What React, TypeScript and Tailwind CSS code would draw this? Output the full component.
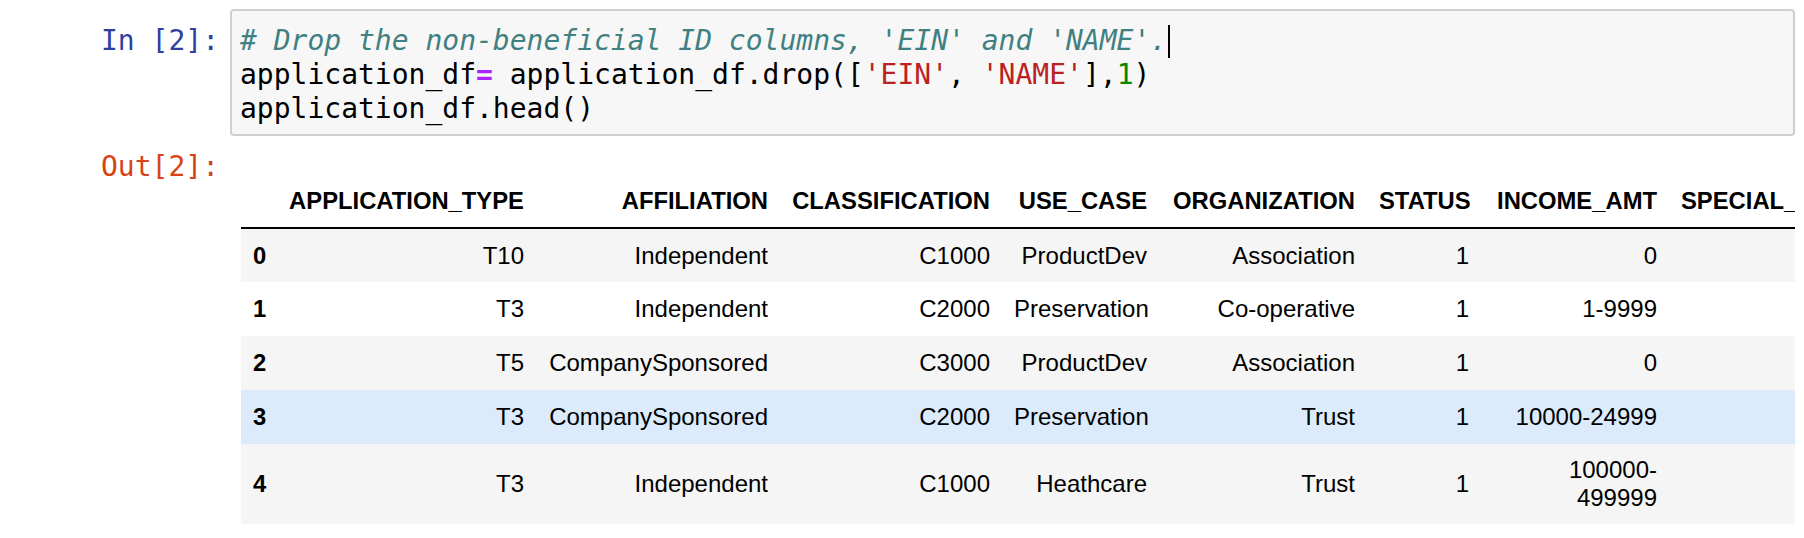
const columns = [
  { name: "APPLICATION_TYPE", width: "w-[259px]" },
  { name: "AFFILIATION", width: "w-[244px]" },
  { name: "CLASSIFICATION", width: "w-[222px]" },
  { name: "USE_CASE", width: "w-[157px]" },
  { name: "ORGANIZATION", width: "w-[208px]" },
  { name: "STATUS", width: "w-[114px]" },
  { name: "INCOME_AMT", width: "w-[188px]" },
  { name: "SPECIAL_CONSIDERATIONS", width: "w-[349px]" },
  { name: "ASK_AMT", width: "w-[157px]" },
  { name: "IS_SUCCESSFUL", width: "w-[216px]" },
];

const rows = [
  ["T10", "Independent", "C1000", "ProductDev", "Association", "1", "0", "N", "5000", "1"],
  ["T3", "Independent", "C2000", "Preservation", "Co-operative", "1", "1-9999", "N", "108590", "1"],
  ["T5", "CompanySponsored", "C3000", "ProductDev", "Association", "1", "0", "N", "5000", "0"],
  ["T3", "CompanySponsored", "C2000", "Preservation", "Trust", "1", "10000-24999", "N", "6692", "1"],
  ["T3", "Independent", "C1000", "Heathcare", "Trust", "1", "100000-499999", "N", "142590", "1"],
];

const rowBg = ["bg-[#f5f5f5]", "bg-white", "bg-[#f5f5f5]", "bg-[#dcebfb]", "bg-[#f5f5f5]"];

const mono = "font-['DejaVu_Sans_Mono',monospace] text-[28px] leading-[34px]";

function Prompt({ label, color, top }: { label: string; color: string; top: string }) {
  return (
    <div className={`w-[230px] shrink-0 pr-[11px] text-right ${top} ${mono} ${color}`}>{label}</div>
  );
}

function CodeCell() {
  return (
    <div className="flex">
      <Prompt label="In [2]:" color="text-[#303f9f]" top="pt-[15px]" />
      <div className={`mr-[9px] flex-1 rounded-[4px] border-2 border-[#cfcfcf] bg-[#f7f7f7] pl-[8px] pt-[13px] pb-[8px] text-black ${mono}`}>
        <div className="flex items-center whitespace-pre">
          <span className="italic text-[#408080]">{"# Drop the non-beneficial ID columns, 'EIN' and 'NAME'."}</span>
          <span className="ml-px inline-block h-[33px] w-[2px] bg-black" />
        </div>
        <div className="whitespace-pre">
          application_df<span className="font-bold text-[#aa22ff]">=</span> application_df.drop([
          <span className="text-[#ba2121]">'EIN'</span>, <span className="text-[#ba2121]">'NAME'</span>],
          <span className="text-[#008800]">1</span>)
        </div>
        <div className="whitespace-pre">application_df.head()</div>
      </div>
    </div>
  );
}

function DataFrame() {
  return (
    <table className="w-[2150px] table-fixed border-collapse font-['Liberation_Sans',Arial,sans-serif] text-[24px] leading-[28px] text-black">
      <thead>
        <tr className="border-b-2 border-black">
          <th className="w-[36px] p-3" />
          {columns.map((col) => (
            <th key={col.name} className={`${col.width} p-3 text-right align-middle text-[23.8px] font-bold whitespace-nowrap`}>
              {col.name}
            </th>
          ))}
        </tr>
      </thead>
      <tbody>
        {rows.map((row, i) => (
          <tr key={i} className={`h-[54px] ${rowBg[i]}`}>
            <th className="p-3 text-left align-middle text-[23.8px] font-bold">{i}</th>
            {row.map((cell, j) => (
              <td key={j} className="p-3 text-right align-middle">
                {cell}
              </td>
            ))}
          </tr>
        ))}
      </tbody>
    </table>
  );
}

export default function App() {
  return (
    <div className="h-[538px] w-[1804px] overflow-hidden bg-white pt-[9px]">
      <CodeCell />
      <div className="flex">
        <Prompt label="Out[2]:" color="text-[#d84315]" top="pt-[14px]" />
        <div className="mr-[9px] min-w-0 flex-1 overflow-hidden pl-[11px] pt-[39px]">
          <DataFrame />
        </div>
      </div>
    </div>
  );
}
